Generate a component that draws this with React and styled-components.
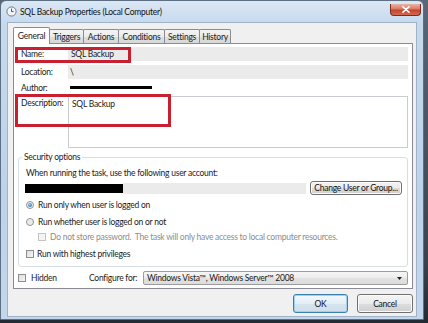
import React from "react";
import styled, { createGlobalStyle } from "styled-components";

const GlobalStyle = createGlobalStyle`
  html, body { margin: 0; padding: 0; }
  body {
    background: #2e3641;
    font-family: Lato, "Noto Sans", sans-serif;
    font-size: 8.5px;
    letter-spacing: -0.25px;
    color: #1b1b1b;
  }
  * { box-sizing: border-box; }
`;

const tabs = [
  { label: "General", w: 37, active: true },
  { label: "Triggers", w: 35 },
  { label: "Actions", w: 36 },
  { label: "Conditions", w: 47 },
  { label: "Settings", w: 36 },
  { label: "History", w: 32 },
];

const Desktop = styled.div`
  width: 428px;
  height: 323px;
  overflow: hidden;
  background: linear-gradient(180deg, #5a6777 0%, #3a4450 80%, #222a33 100%);
`;

const Window = styled.div`
  width: 424px;
  height: 320px;
  border: 1px solid #5d6f82;
  border-radius: 6px 6px 0 0;
  background: linear-gradient(180deg, #dbe7f4 0, #c6daee 22px, #bdd3ea 60%, #c3d7ec 100%);
  padding: 0 6px 2px 6px;
  display: flex;
  flex-direction: column;
`;

const TitleBar = styled.div`
  height: 21px;
  margin: 0 -6px;
  padding: 0 2px 0 5px;
  display: flex;
  align-items: center;
  gap: 3px;
`;

const Title = styled.span`
  line-height: 12px;
  color: #101010;
`;

const CloseButton = styled.div`
  margin-left: auto;
  align-self: flex-start;
  margin-top: 3px;
  width: 31px;
  height: 12px;
  border: 1px solid #7a2c22;
  border-top: none;
  border-radius: 0 0 4px 4px;
  background: linear-gradient(180deg, #eab3a4 0%, #d97a64 45%, #c5442c 55%, #d5694f 100%);
  display: flex;
  align-items: center;
  justify-content: center;
`;

const Client = styled.div`
  flex: 1;
  background: #f0f0f0;
  border: 1px solid #9fb2c8;
  padding: 4px 3px 0 5px;
  display: flex;
  flex-direction: column;
`;

const TabStrip = styled.div`
  height: 16px;
  display: flex;
  align-items: flex-end;
  position: relative;
  z-index: 1;
`;

const Tab = styled.div`
  width: ${(p) => p.$w}px;
  height: ${(p) => (p.$active ? 17 : 14)}px;
  margin-left: ${(p) => (p.$active ? 0 : -1)}px;
  margin-bottom: ${(p) => (p.$active ? -1 : 0)}px;
  border: 1px solid #898c95;
  border-bottom: none;
  border-radius: 2px 2px 0 0;
  background: ${(p) =>
    p.$active ? "#ffffff" : "linear-gradient(180deg, #f4f4f4 0%, #ebebeb 50%, #dedede 51%, #d8d8d8 100%)"};
  display: flex;
  align-items: center;
  justify-content: center;
  line-height: 12px;
  padding-bottom: ${(p) => (p.$active ? 1 : 0)}px;
`;

const Panel = styled.div`
  position: relative;
  height: 246px;
  border: 1px solid #898c95;
  background: #ffffff;
  padding: 3px 4px 0 4px;
`;

const Row = styled.div`
  display: grid;
  grid-template-columns: 47px 1fr;
  align-items: ${(p) => (p.$top ? "start" : "center")};
  margin-top: ${(p) => p.$mt || 0}px;
  padding-left: 3px;
  height: ${(p) => p.$h}px;
`;

const Label = styled.span`
  line-height: 12px;
  padding-top: ${(p) => p.$pt || 0}px;
`;

const ReadOnlyField = styled.div`
  height: 14px;
  background: #ebebeb;
  padding-left: ${(p) => p.$pl ?? 3}px;
  line-height: 14px;
`;

const Redacted = styled.span`
  display: block;
  width: ${(p) => p.$w}px;
  height: ${(p) => p.$h}px;
  margin-left: ${(p) => p.$ml || 0}px;
  background: #000;
`;

const TextArea = styled.div`
  height: 52px;
  border: 1px solid #c9ccd2;
  padding: 1px 3px;
  line-height: 12px;
`;

const Highlight = styled.div`
  position: absolute;
  left: ${(p) => p.$x}px;
  top: ${(p) => p.$y}px;
  width: ${(p) => p.$w}px;
  height: ${(p) => p.$h}px;
  border: 3px solid #c8202f;
  pointer-events: none;
`;

const GroupBox = styled.fieldset`
  margin: 3px 0 0;
  padding: 4px 5px 6px 7px;
  border: 1px solid #d5dfe5;
  border-radius: 3px;
  min-width: 0;
`;

const Legend = styled.legend`
  padding: 0 2px;
  margin-left: -4px;
  line-height: 12px;
`;

const Text = styled.div`
  line-height: 12px;
`;

const AccountRow = styled.div`
  display: flex;
  align-items: center;
  height: 14px;
  margin-top: 2px;
`;

const AccountField = styled.div`
  width: 183px;
  height: 11px;
  background: #ebebeb;
`;

const PushButton = styled.div`
  width: ${(p) => p.$w}px;
  height: ${(p) => p.$h}px;
  margin-left: ${(p) => p.$ml || 0}px;
  border: 1px solid ${(p) => (p.$default ? "#3c7fb1" : "#707070")};
  border-radius: 3px;
  background: ${(p) =>
    p.$default
      ? "linear-gradient(180deg, #f2f8fc 0%, #e4eef6 50%, #d6e4ef 51%, #cfdeea 100%)"
      : "linear-gradient(180deg, #f4f4f4 0%, #ebebeb 50%, #dddddd 51%, #cfcfcf 100%)"};
  box-shadow: inset 0 0 0 1px ${(p) => (p.$default ? "#9fd0ee" : "#fbfbfb")};
  display: flex;
  align-items: center;
  justify-content: center;
  line-height: 12px;
  color: #111;
`;

const OptionRow = styled.div`
  display: flex;
  align-items: center;
  gap: ${(p) => p.$gap || 3}px;
  height: 12px;
  margin-top: ${(p) => p.$mt}px;
  padding-left: ${(p) => p.$indent || 0}px;
  color: ${(p) => (p.$disabled ? "#8d8d8d" : "inherit")};
  line-height: 12px;
`;

const Radio = styled.span`
  width: 8px;
  height: 8px;
  border-radius: 50%;
  border: 1px solid #8e8f8f;
  background: radial-gradient(circle, #e4e4e4 0%, #f8f8f8 100%);
  display: flex;
  align-items: center;
  justify-content: center;
  &::after {
    content: "";
    width: 4px;
    height: 4px;
    border-radius: 50%;
    background: ${(p) => (p.$checked ? "radial-gradient(circle at 40% 35%, #8ad0f5, #1c5aa0)" : "transparent")};
  }
`;

const Checkbox = styled.span`
  width: 8px;
  height: 8px;
  flex: none;
  border: 1px solid ${(p) => (p.$disabled ? "#c4c4c4" : "#8e8f8f")};
  background: ${(p) => (p.$disabled ? "#f4f4f4" : "linear-gradient(135deg, #dcdcdc 0%, #f6f6f6 100%)")};
`;

const BottomRow = styled.div`
  display: grid;
  grid-template-columns: 71px 54px 1fr;
  align-items: center;
  height: 14px;
  margin-top: 4px;
`;

const Inline = styled.div`
  display: flex;
  align-items: center;
  gap: 5px;
  line-height: 12px;
`;

const Select = styled.div`
  height: 14px;
  border: 1px solid #9c9c9c;
  border-radius: 2px;
  background: linear-gradient(180deg, #f6f6f6 0%, #ececec 50%, #e2e2e2 51%, #dcdcdc 100%);
  padding: 0 5px 0 3px;
  display: flex;
  align-items: center;
  justify-content: space-between;
  line-height: 12px;
`;

const Footer = styled.div`
  display: flex;
  justify-content: flex-end;
  gap: 9px;
  margin-top: 5px;
  padding-right: 0;
`;

const ClockIcon = () => (
  <svg width="11" height="11" viewBox="0 0 11 11">
    <circle cx="5.5" cy="5.5" r="4.6" fill="#f3f5f7" stroke="#6f7c8b" strokeWidth="1" />
    <path d="M5.5 2.6 V5.6 H7.6" fill="none" stroke="#3b4654" strokeWidth="0.9" />
  </svg>
);

const CloseGlyph = () => (
  <svg width="8" height="7" viewBox="0 0 8 7">
    <path d="M1 0.8 L7 6.2 M7 0.8 L1 6.2" stroke="#ffffff" strokeWidth="1.6" strokeLinecap="round" />
  </svg>
);

const Arrow = () => (
  <svg width="5" height="3" viewBox="0 0 5 3">
    <path d="M0 0 H5 L2.5 3 Z" fill="#202020" />
  </svg>
);

export default function App() {
  return (
    <Desktop>
      <GlobalStyle />
      <Window>
        <TitleBar>
          <ClockIcon />
          <Title>SQL Backup Properties (Local Computer)</Title>
          <CloseButton>
            <CloseGlyph />
          </CloseButton>
        </TitleBar>
        <Client>
          <TabStrip>
            {tabs.map((t) => (
              <Tab key={t.label} $w={t.w} $active={t.active}>
                {t.label}
              </Tab>
            ))}
          </TabStrip>
          <Panel>
            <Row $h={14}>
              <Label>Name:</Label>
              <ReadOnlyField>SQL Backup</ReadOnlyField>
            </Row>
            <Row $h={14} $mt={4}>
              <Label>Location:</Label>
              <ReadOnlyField $pl={2}>\</ReadOnlyField>
            </Row>
            <Row $h={13} $mt={2}>
              <Label>Author:</Label>
              <Redacted $w={82} $h={3} $ml={2} />
            </Row>
            <Row $h={52} $mt={2} $top>
              <Label $pt={1}>Description:</Label>
              <TextArea>SQL Backup</TextArea>
            </Row>

            <GroupBox>
              <Legend>Security options</Legend>
              <Text>When running the task, use the following user account:</Text>
              <AccountRow>
                <Redacted $w={98} $h={9} $ml={-1} />
                <AccountField />
                <PushButton $w={92} $h={14} $ml={4}>
                  Change User or Group...
                </PushButton>
              </AccountRow>
              <OptionRow $mt={4} $gap={4} $indent={-1}>
                <Radio $checked />
                Run only when user is logged on
              </OptionRow>
              <OptionRow $mt={5} $gap={4} $indent={-1}>
                <Radio />
                Run whether user is logged on or not
              </OptionRow>
              <OptionRow $mt={3} $indent={12} $gap={4} $disabled>
                <Checkbox $disabled />
                Do not store password.&nbsp; The task will only have access to local computer resources.
              </OptionRow>
              <OptionRow $mt={5}>
                <Checkbox />
                Run with highest privileges
              </OptionRow>
            </GroupBox>

            <BottomRow>
              <Inline>
                <Checkbox />
                Hidden
              </Inline>
              <Inline>Configure for:</Inline>
              <Select>
                <span>Windows Vista™, Windows Server™ 2008</span>
                <Arrow />
              </Select>
            </BottomRow>

            <Highlight $x={1} $y={3} $w={116} $h={16} />
            <Highlight $x={1} $y={50} $w={156} $h={33} />
          </Panel>
          <Footer>
            <PushButton $w={55} $h={19} $default>
              OK
            </PushButton>
            <PushButton $w={56} $h={19}>
              Cancel
            </PushButton>
          </Footer>
        </Client>
      </Window>
    </Desktop>
  );
}
